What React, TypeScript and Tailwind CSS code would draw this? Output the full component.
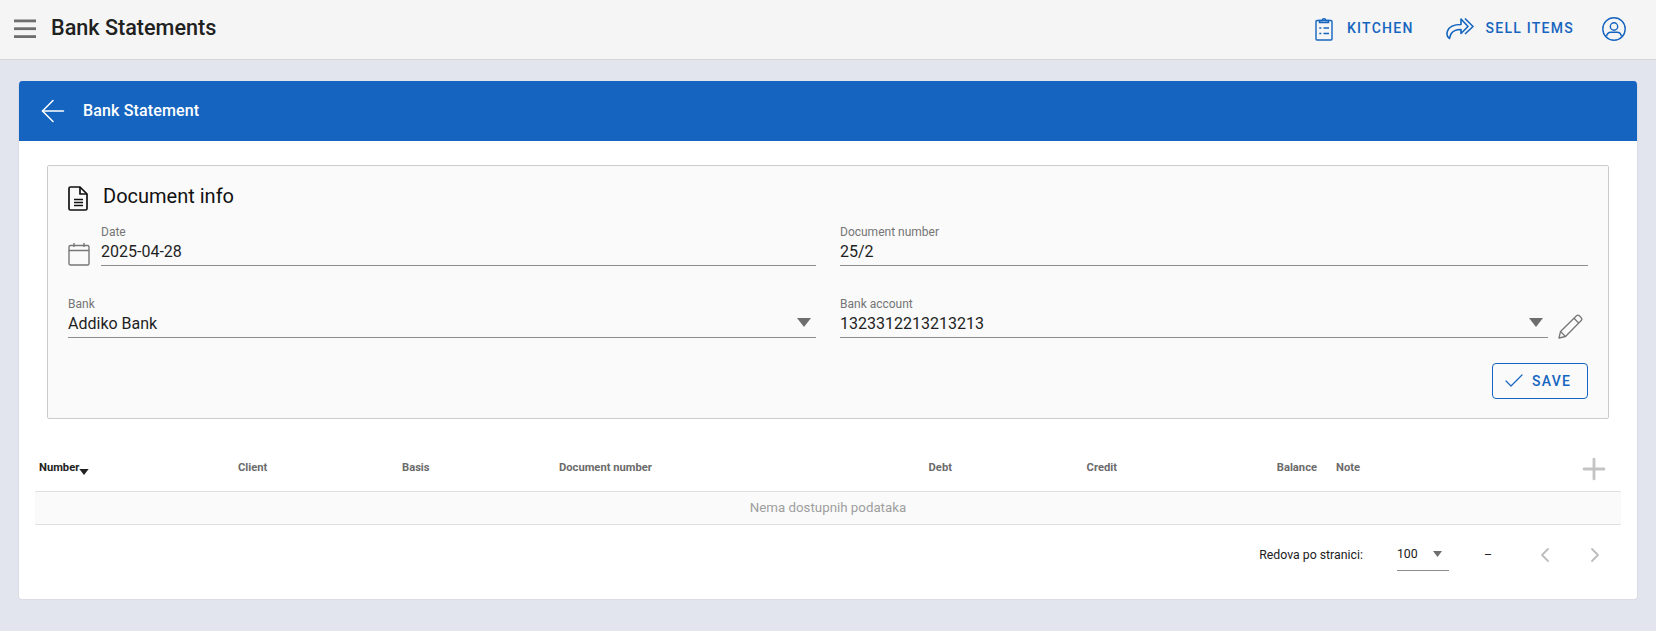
import { ArrowLeft, Check, ChevronLeft, ChevronRight, Plus } from "lucide-react";

const Caret = ({ className = "" }: { className?: string }) => (
  <svg viewBox="0 0 14 9" className={className} fill="currentColor">
    <path d="M0 0h14L7 9z" />
  </svg>
);

const MenuIcon = () => (
  <svg viewBox="0 0 22 20" className="w-[22px] h-[20px] text-[#6e6e6e]" fill="currentColor">
    <rect x="0" y="0.500" width="22" height="2.800" />
    <rect x="0" y="8.300" width="22" height="2.800" />
    <rect x="0" y="16.200" width="22" height="2.800" />
  </svg>
);

const ClipboardIcon = () => (
  <svg viewBox="0 0 18 24" className="w-[18px] h-[24px]" fill="none" stroke="currentColor" strokeWidth="1.400">
    <rect x="1" y="3.500" width="16" height="19.500" rx="1" />
    <path d="M4.500 5.500V3.500h2.800a1.700 1.700 0 0 1 3.400 0h2.800v2H4.500z" />
    <path d="M8.500 11h5.500M8.500 16.500h5.500M4.300 11h2M4.300 16.500h2" strokeWidth="1.600" />
  </svg>
);

const ShareIcon = () => (
  <svg viewBox="0 0 28 23" className="w-[28px] h-[23px]" fill="none" stroke="currentColor" strokeWidth="1.600" strokeLinejoin="round">
    <path d="M15 2l7 7.500-7 7v-4c-5 0-8 1-10 4.500-.600 1-1 2.500-1.500 4.500C1 20 .500 17 1.500 14c1.500-4 6-6.500 13.500-6.500z" />
    <path d="M19 1.500l8 8-8 7.500" />
  </svg>
);

const UserIcon = () => (
  <svg viewBox="0 0 24 24" className="w-[24px] h-[24px]" fill="none" stroke="currentColor" strokeWidth="1.400">
    <circle cx="12" cy="12" r="11.200" />
    <circle cx="12" cy="9.500" r="3.700" />
    <path d="M4.600 19.500c.300-3 2.500-4.300 4.400-4.300h6c1.900 0 4.100 1.300 4.400 4.300" />
  </svg>
);

const DocIcon = () => (
  <svg viewBox="0 0 20 25" className="w-[20px] h-[25px] text-[#111]" fill="none" stroke="currentColor" strokeWidth="1.700" strokeLinejoin="round">
    <path d="M2.500 1h9.500l7 7v14.500a1.500 1.500 0 0 1-1.500 1.500h-15A1.500 1.500 0 0 1 1 22.500v-20A1.500 1.500 0 0 1 2.500 1z" />
    <path d="M12 1v7h7" />
    <path d="M6 13.500h9M6 16.500h9M6 19.500h9" />
  </svg>
);

const CalendarIcon = () => (
  <svg viewBox="0 0 22 24" className="w-[22px] h-[24px] text-[#777]" fill="none" stroke="currentColor" strokeWidth="1.400">
    <rect x="1" y="3.500" width="20" height="19.500" rx="1.500" />
    <path d="M1 8.500h20M6 1v4M16 1v4" />
  </svg>
);

const PencilIcon = () => (
  <svg viewBox="0 0 25 25" className="w-[25px] h-[25px] text-[#777]" fill="none" stroke="currentColor" strokeWidth="1.300" strokeLinejoin="round">
    <path d="M1 24l1.500-6.500L18.500 1.800a2 2 0 0 1 2.800 0l1.900 1.900a2 2 0 0 1 0 2.800L7.500 22.500z" />
    <path d="M16 4.300l4.700 4.700M2.500 17.500l5 5" />
  </svg>
);

const Field = ({ label, value, select }: { label: string; value: string; select?: boolean }) => (
  <div className="flex-1 min-w-0 border-b border-[#8c8c8c] h-[41px] relative">
    <div className="text-[12px] leading-[14px] text-[#757575]">{label}</div>
    <div className="text-[16px] leading-[22px] mt-[2px] text-[#1f1f1f]">{value}</div>
    {select && <Caret className="absolute right-[5px] top-[21px] w-[14px] h-[9px] text-[#6e6e6e]" />}
  </div>
);

const headCell = "text-[11.200px] font-bold text-[#6b6b6b]";

export default function App() {
  return (
    <div className="h-[631px] bg-[#e2e5ee] overflow-hidden font-['Roboto',sans-serif]">
      {/* Top bar */}
      <header className="h-[60px] bg-[#f5f5f5] border-b border-[#d6d6d6] flex items-center pb-[2px] pl-[14px] pr-[30px]">
        <MenuIcon />
        <h1 className="ml-[15px] mb-[1px] text-[21.600px] font-medium text-[#212121]">Bank Statements</h1>
        <div className="ml-auto flex items-center text-[#1565c0]">
          <ClipboardIcon />
          <span className="ml-[14px] text-[14px] font-medium tracking-[1.250px]">KITCHEN</span>
          <span className="ml-[32px]"><ShareIcon /></span>
          <span className="ml-[12px] text-[14px] font-medium tracking-[1.250px]">SELL ITEMS</span>
          <span className="ml-[28px]"><UserIcon /></span>
        </div>
      </header>

      {/* Card */}
      <main className="mx-[18px] mt-[21px] h-[519px] bg-white rounded-[4px] border border-[#d9dce6] border-t-0 overflow-hidden">
        <div className="h-[60px] bg-[#1565c0] flex items-center pl-[16px] text-white">
          <ArrowLeft size={36} strokeWidth={1} />
          <span className="ml-[12px] text-[16px] font-medium tracking-[0.150px]">Bank Statement</span>
        </div>

        <section className="mx-[28px] mt-[24px] h-[254px] bg-[#fafafa] border border-[#cccccc] rounded-[2px] pl-[20px] pr-[20px] pt-[20px]">
          <div className="flex items-center h-[25px]">
            <DocIcon />
            <h2 className="ml-[15px] mb-[6px] text-[20px] text-[#111]">Document info</h2>
          </div>
          <div className="flex gap-[24px] mt-[14px]">
            <div className="flex-1 flex items-end">
              <CalendarIcon />
              <div className="flex-1 ml-[11px]"><Field label="Date" value="2025-04-28" /></div>
            </div>
            <div className="flex-1 flex"><Field label="Document number" value="25/2" /></div>
          </div>
          <div className="flex gap-[24px] mt-[31px]">
            <Field label="Bank" value="Addiko Bank" select />
            <div className="flex-1 flex items-end">
              <Field label="Bank account" value="1323312213213213" select />
              <span className="ml-[10px] mr-[5px] mb-[-1px]"><PencilIcon /></span>
            </div>
          </div>
          <div className="flex justify-end mt-[25px]">
            <button className="w-[96px] h-[36px] border border-[#1565c0] rounded-[4px] flex items-center pl-[9px] text-[#1565c0] text-[14px] font-medium tracking-[1.250px]">
              <Check size={24} strokeWidth={1.200} className="mr-[6px]" />
              SAVE
            </button>
          </div>
        </section>

        {/* Table */}
        <div className="mx-[16px] mt-[32px]">
          <div className="h-[41px] pb-[6px] grid grid-cols-[199px_164px_157px_245px_152px_165px_200px_1fr] items-center border-b border-[#e0e0e0]">
            <div className="pl-[4px] flex items-end text-[11.200px] font-bold text-[#212121]">
              Number
              <Caret className="w-[10px] h-[6px] mb-[1px] text-[#212121]" />
            </div>
            <div className={`pl-[4px] ${headCell}`}>Client</div>
            <div className={`pl-[4px] ${headCell}`}>Basis</div>
            <div className={`pl-[4px] ${headCell}`}>Document number</div>
            <div className={`text-right ${headCell}`}>Debt</div>
            <div className={`text-right ${headCell}`}>Credit</div>
            <div className={`text-right ${headCell}`}>Balance</div>
            <div className={`pl-[19px] pr-[10px] h-[34px] flex items-center justify-between ${headCell}`}>
              Note
              <Plus size={34} strokeWidth={2} className="mt-[1px] text-[#c4c4c4]" />
            </div>
          </div>
          <div className="h-[33px] bg-[#fafafa] border-b border-[#e0e0e0] flex items-center justify-center text-[13.300px] text-[#9e9e9e]">
            Nema dostupnih podataka
          </div>
          <div className="h-[46px] mt-[7px] flex items-center justify-end text-[12.300px] text-[#212121]">
            <span>Redova po stranici:</span>
            <div className="ml-[34px] w-[52px] h-[32px] border-b border-[#8c8c8c] flex items-center relative">
              100
              <Caret className="absolute right-[7px] top-[12px] w-[9px] h-[6px] text-[#6e6e6e]" />
            </div>
            <span className="ml-[35px]">–</span>
            <ChevronLeft size={24} strokeWidth={1.800} className="ml-[41px] text-[#bdbdbd]" />
            <ChevronRight size={24} strokeWidth={1.800} className="ml-[26px] mr-[14px] text-[#bdbdbd]" />
          </div>
        </div>
      </main>
    </div>
  );
}
